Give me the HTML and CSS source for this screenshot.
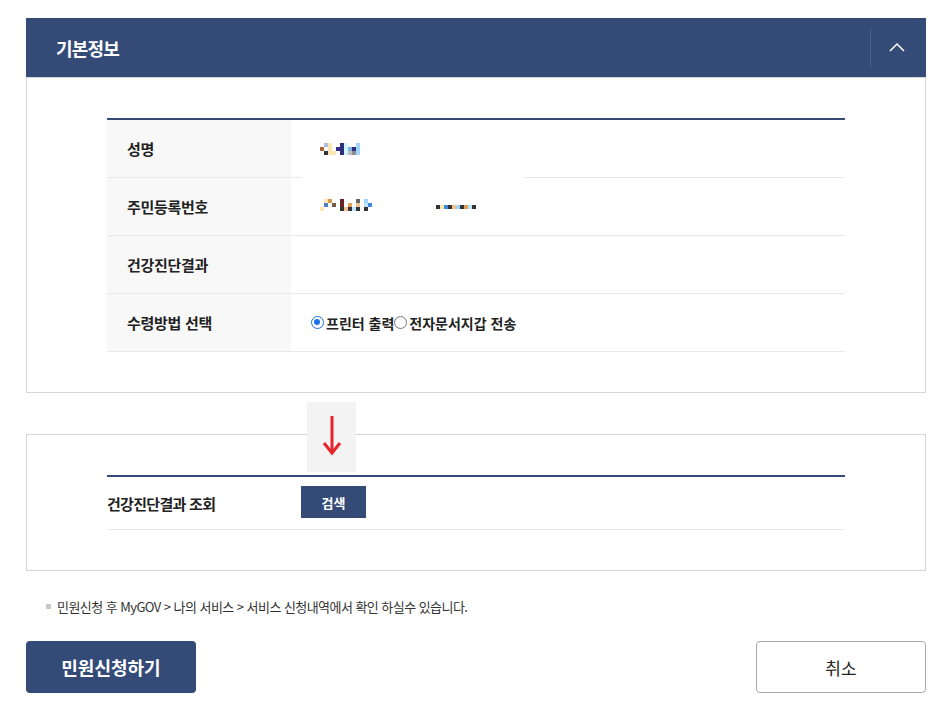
FILE: index.html
```html
<!DOCTYPE html>
<html lang="ko">
<head>
<meta charset="utf-8">
<link rel="stylesheet" href="styles.css">
</head>
<body>
<div class="page">
  <section class="panel">
    <div class="panel-head">
      <h2 class="panel-title">기본정보</h2>
      <div class="panel-toggle">
        <svg width="16" height="10" viewBox="0 0 16 10"><path d="M1 9 L8 2 L15 9" fill="none" stroke="#fff" stroke-width="1.5"/></svg>
      </div>
    </div>
    <div class="panel-body">
      <div class="table">
        <div class="row">
          <div class="th">성명</div>
          <div class="td">
            <div class="mask mask-name">
              <svg width="42" height="13" viewBox="0 0 42 13">
                <rect x="0" y="5" width="4" height="4" fill="#a8642c"/>
                <rect x="4" y="1" width="4" height="4" fill="#a9bfdc"/>
                <rect x="4" y="9" width="4" height="4" fill="#333"/>
                <rect x="8" y="1" width="4" height="12" fill="#fde6b4"/>
                <rect x="12" y="9" width="4" height="4" fill="#fde6b4"/>
                <rect x="16" y="5" width="4" height="4" fill="#2e2f80"/>
                <rect x="20" y="1" width="4" height="12" fill="#2e2f80"/>
                <rect x="24" y="1" width="4" height="12" fill="#cff6f8"/>
                <rect x="28" y="5" width="4" height="4" fill="#7fb5e0"/>
                <rect x="28" y="9" width="4" height="4" fill="#bdbdbd"/>
                <rect x="32" y="5" width="4" height="4" fill="#2e2f80"/>
                <rect x="32" y="9" width="4" height="4" fill="#8f8f8f"/>
                <rect x="36" y="1" width="4" height="12" fill="#9fd6ff"/>
              </svg>
            </div>
          </div>
        </div>
        <div class="row">
          <div class="th">주민등록번호</div>
          <div class="td">
            <span class="blob">
              <svg width="52" height="16" viewBox="0 0 52 16">
                <rect x="4" y="0" width="4" height="4" fill="#fde6b4"/>
                <rect x="8" y="0" width="4" height="4" fill="#d8974c"/>
                <rect x="4" y="4" width="4" height="4" fill="#4a82c8"/>
                <rect x="12" y="4" width="4" height="4" fill="#6b5d4a"/>
                <rect x="0" y="8" width="4" height="4" fill="#fde6b4"/>
                <rect x="20" y="0" width="4" height="8" fill="#6b2222"/>
                <rect x="20" y="8" width="4" height="4" fill="#333"/>
                <rect x="24" y="8" width="4" height="4" fill="#f4c08a"/>
                <rect x="28" y="4" width="4" height="4" fill="#e0a060"/>
                <rect x="28" y="8" width="4" height="4" fill="#333"/>
                <rect x="32" y="8" width="4" height="4" fill="#bfe6ff"/>
                <rect x="36" y="0" width="4" height="4" fill="#666"/>
                <rect x="36" y="4" width="4" height="4" fill="#f4c08a"/>
                <rect x="36" y="8" width="4" height="4" fill="#333"/>
                <rect x="44" y="0" width="4" height="4" fill="#9fd6ff"/>
                <rect x="44" y="4" width="4" height="4" fill="#bfe6ff"/>
                <rect x="48" y="4" width="4" height="4" fill="#3f8ad6"/>
                <rect x="44" y="8" width="4" height="4" fill="#333"/>
              </svg>
            </span>
            <span class="blob blob-2">
              <svg width="40" height="4" viewBox="0 0 40 4">
                <rect x="0" y="0" width="4" height="4" fill="#333"/>
                <rect x="4" y="0" width="4" height="4" fill="#fde6b4"/>
                <rect x="8" y="0" width="4" height="4" fill="#3f8ad6"/>
                <rect x="12" y="0" width="4" height="4" fill="#333"/>
                <rect x="16" y="0" width="4" height="4" fill="#f4c08a"/>
                <rect x="20" y="0" width="4" height="4" fill="#9fd6ff"/>
                <rect x="24" y="0" width="4" height="4" fill="#333"/>
                <rect x="28" y="0" width="4" height="4" fill="#e0a060"/>
                <rect x="32" y="0" width="4" height="4" fill="#bfe6ff"/>
                <rect x="36" y="0" width="4" height="4" fill="#333"/>
              </svg>
            </span>
          </div>
        </div>
        <div class="row">
          <div class="th">건강진단결과</div>
          <div class="td"></div>
        </div>
        <div class="row">
          <div class="th">수령방법 선택</div>
          <div class="td">
            <label class="radio"><span class="dot on"></span>프린터 출력</label><label class="radio"><span class="dot"></span>전자문서지갑 전송</label>
          </div>
        </div>
      </div>
    </div>
  </section>

  <section class="panel panel-search">
    <div class="arrow-box">
      <svg width="20" height="42" viewBox="0 0 20 42"><path d="M10 1 V38" stroke="#e8242a" stroke-width="3"/><path d="M2 28 L10 38 L18 28" fill="none" stroke="#e8242a" stroke-width="3"/></svg>
    </div>
    <div class="table table-search">
      <div class="srow">
        <div class="slabel">건강진단결과 조회</div>
        <button class="btn-search">검색</button>
      </div>
    </div>
  </section>

  <p class="note"><span class="sq"></span>민원신청 후 MyGOV &gt; 나의 서비스 &gt; 서비스 신청내역에서 확인 하실수 있습니다.</p>

  <div class="actions">
    <button class="btn btn-primary">민원신청하기</button>
    <button class="btn btn-cancel">취소</button>
  </div>
</div>
</body>
</html>
```

FILE: styles.css
```css
* { box-sizing: border-box; }
body {
  margin: 0;
  font-family: "Noto Sans CJK KR", "Noto Sans", sans-serif;
  color: #222;
  background: #fff;
}
.page {
  width: 900px;
  margin-left: 26px;
  padding-top: 18px;
}
.panel-head {
  height: 59px;
  background: #344b78;
  display: flex;
  align-items: center;
  justify-content: space-between;
}
.panel-title {
  margin: 0 0 0 30px;
  font-size: 18px;
  font-weight: 700;
  color: #fff;
  letter-spacing: -0.8px;
}
.panel-toggle {
  width: 56px;
  height: 39px;
  border-left: 1px solid #4a618c;
  display: flex;
  align-items: center;
  justify-content: center;
}
.panel-toggle svg { margin-top: -2px; margin-right: 4px; }
.panel-body {
  border: 1px solid #d5d5d5;
  padding: 40px 80px 40px 80px;
}
.table {
  border-top: 2px solid #344b78;
}
.row {
  display: grid;
  grid-template-columns: 184px 1fr;
  height: 58px;
  border-bottom: 1px solid #e9e9e9;
}
.th {
  background: #f8f8f8;
  padding-left: 20px;
  display: flex;
  align-items: center;
  font-size: 15px;
  font-weight: 700;
  color: #222;
  letter-spacing: -0.3px;
}
.td {
  position: relative;
  display: flex;
  align-items: center;
  padding-left: 20px;
  font-size: 14px;
}
.mask {
  position: absolute;
  left: 11px;
  top: 10px;
  width: 221px;
  height: 49px;
  background: #fff;
}
.mask-name svg { position: absolute; left: 18px; top: 12px; }
.blob { display: inline-flex; margin-left: 9px; }
.blob-2 { margin-left: 64px; margin-top: 1px; }
.radio {
  display: inline-flex;
  align-items: center;
  font-size: 14px;
  font-weight: 700;
  color: #222;
  letter-spacing: 0;
}
.dot {
  width: 13px;
  height: 13px;
  border-radius: 50%;
  border: 1px solid #767676;
  background: #fff;
  margin-right: 2px;
  position: relative;
}
.dot.on {
  border: 1.5px solid #1a73e8;
}
.dot.on::after {
  content: "";
  position: absolute;
  left: 2px;
  top: 2px;
  width: 6px;
  height: 6px;
  border-radius: 50%;
  background: #1a73e8;
}
.panel-search {
  position: relative;
  margin-top: 41px;
  border: 1px solid #d5d5d5;
  padding: 40px 80px 40px 80px;
}
.arrow-box {
  position: absolute;
  left: 280px;
  top: -33px;
  width: 49px;
  height: 70px;
  background: #f3f3f3;
  display: flex;
  justify-content: center;
  padding-top: 13px;
}
.srow {
  display: flex;
  align-items: center;
  height: 53px;
  border-bottom: 1px solid #e9e9e9;
}
.slabel {
  width: 194px;
  font-size: 15px;
  font-weight: 700;
  letter-spacing: -0.7px;
  color: #222;
}
.btn-search {
  width: 65px;
  height: 32px;
  border: 0;
  background: #344b78;
  color: #fff;
  font-family: inherit;
  font-size: 13px;
  font-weight: 700;
  margin-top: -2px;
}
.note {
  margin: 26px 0 0 20px;
  font-size: 13px;
  color: #333;
  letter-spacing: -0.55px;
  display: flex;
  align-items: center;
}
.sq {
  width: 5px;
  height: 5px;
  background: #c8c8c8;
  margin-right: 6px;
}
.actions {
  margin-top: 25px;
  display: flex;
  justify-content: space-between;
}
.btn {
  width: 170px;
  height: 52px;
  border-radius: 4px;
  font-family: inherit;
  font-size: 17px;
}
.btn-primary {
  background: #344b78;
  border: 0;
  color: #fff;
  font-weight: 700;
  font-size: 18px;
}
.btn-cancel {
  background: #fff;
  border: 1px solid #aaa;
  color: #222;
  font-weight: 400;
}
```
